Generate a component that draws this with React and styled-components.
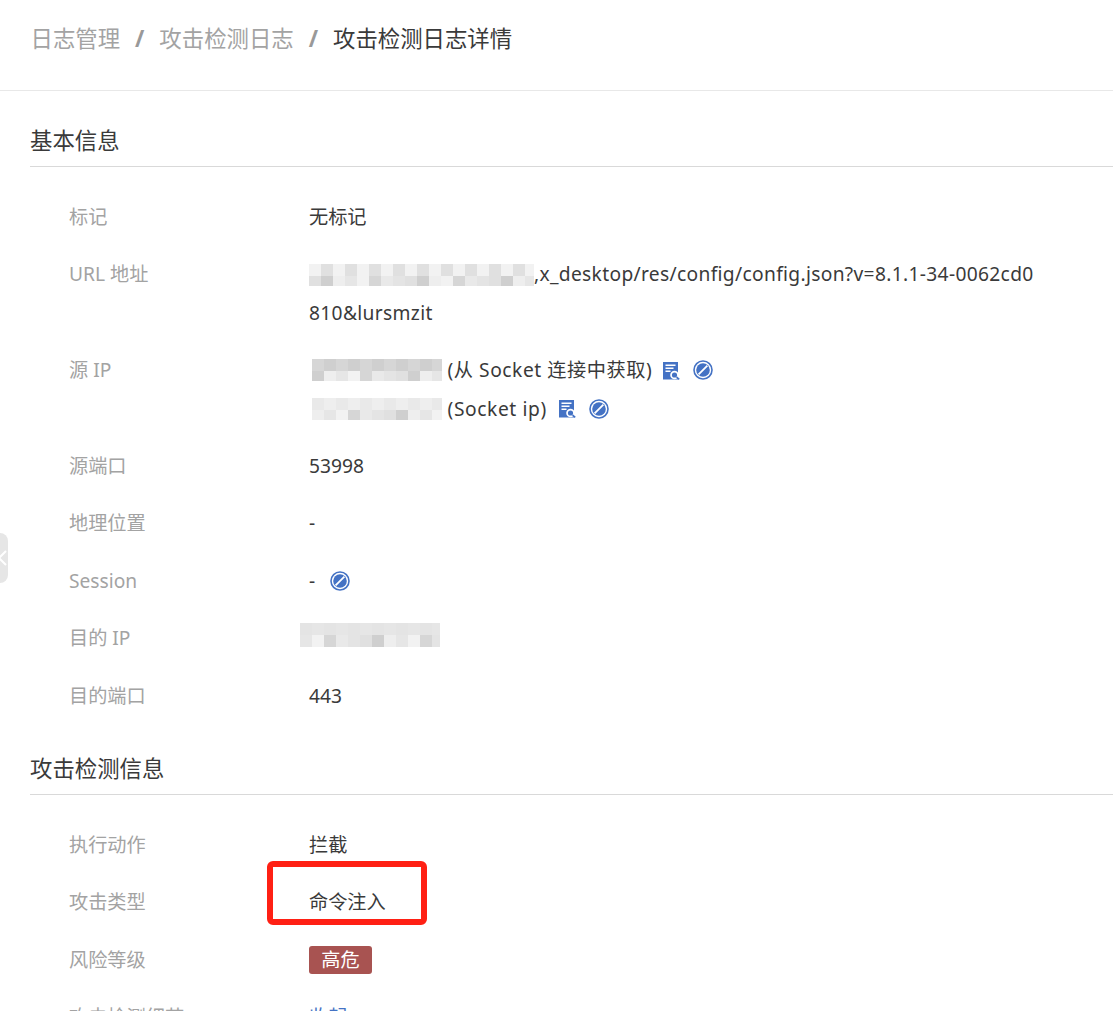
import React from "react";
import styled, { createGlobalStyle } from "styled-components";

const Global = createGlobalStyle`
  html, body { margin: 0; padding: 0; background: #fff; height: 100%; overflow: hidden; }
  body { font-family: "Noto Sans", "Noto Sans CJK SC", sans-serif; color: #333; }
`;
const Page = styled.div`
  width: 1113px; height: 1011px; overflow: hidden; position: relative; background: #fff;
`;
const Crumbs = styled.nav`
  height: 91px; box-sizing: border-box; border-bottom: 1px solid #e8e8e8;
  padding: 20px 0 0 30.5px; display: flex; align-items: flex-start;
  font-size: 22.4px; line-height: 38px; color: #a3a3a3;
`;
const Sep = styled.span` margin: 0 15px; font-weight: 700; color: #999; `;
const Current = styled.span` color: #3a3a3a; `;
const Body = styled.main` padding: 30px 0 0 30px; `;
const SectionTitle = styled.h2`
  margin: 0; font-size: 22.4px; line-height: 40px; font-weight: 400; color: #3a3a3a;
  height: 46px; box-sizing: border-box; border-bottom: 1px solid #d9d9d9;
  & + div { margin-top: 31px; }
`;
const Rows = styled.div` margin-bottom: 15px; `;
const Row = styled.div`
  display: flex; padding: 0 0 19px 39px; font-size: 19.2px; line-height: 38.4px;
`;
const Label = styled.div` width: 240px; flex: none; color: #a3a3a3; `;
const Value = styled.div` flex: 1; min-width: 0; width: 744px; color: #3a3a3a; word-break: break-all; `;
const Line = styled.div`
  display: flex; align-items: center; height: 38.4px; white-space: pre;
  letter-spacing: ${p => p.$track || 0}px;
`;
const Mosaic = styled.svg`
  display: inline-block; flex: none;
  margin-left: ${p => p.$shift || 0}px;
  margin-bottom: ${p => p.$lift || 0}px;
`;
const IconBtn = styled.svg` flex: none; margin-left: ${p => p.$gap}px; `;
const Tag = styled.span`
  display: inline-flex; align-items: center; justify-content: center;
  width: 63px; height: 28px; border-radius: 3px; background: #a85351; color: #fff;
  font-size: 19.2px; line-height: 28px;
`;
const TagLine = styled.div` height: 38.4px; display: flex; align-items: center; `;
const Link = styled.a` color: #4472c4; `;
const Highlight = styled.div`
  position: absolute; left: 267px; top: 861px; width: 160px; height: 64px; box-sizing: border-box;
  border: 6px solid #ff2014; border-radius: 6px;
`;
const Handle = styled.div`
  position: absolute; left: 0; top: 533px; width: 8px; height: 50px; background: #e6e6e6;
  border-radius: 0 8px 8px 0; overflow: hidden;
`;
const Chev = styled.svg` display: block; margin-top: 17px; `;

const shades = ["#e6e6e6", "#e0e0e0", "#d6d6d6", "#eeeeee", "#e4e4e4", "#f2f2f2", "#cfcfcf", "#e9e9e9"];
function Pixels({ w, h, seed, shift, lift, cell = 12 }) {
  const rects = [];
  for (let y = 0; y < h; y += cell) {
    for (let x = 0; x < w; x += cell) {
      const i = (x * 7 + y * 13 + seed * 5 + ((x * y) % 11)) % shades.length;
      rects.push(<rect key={`${x}-${y}`} x={x} y={y} width={cell} height={cell} fill={shades[i]} />);
    }
  }
  return <Mosaic $shift={shift} $lift={lift} width={w} height={h} viewBox={`0 0 ${w} ${h}`}>{rects}</Mosaic>;
}

const LookupIcon = ({ gap }) => (
  <IconBtn $gap={gap} width="17" height="19" viewBox="0 0 17 19">
    <path d="M0 1h15v17.5H0z" fill="#4472c4" />
    <path d="M2.5 4.2h10M2.5 7.2h8M2.5 10.2h5" stroke="#fff" strokeWidth="1.4" fill="none" />
    <circle cx="11.5" cy="14" r="4.3" fill="#fff" />
    <circle cx="11.5" cy="14" r="2.6" fill="#4472c4" />
    <path d="M13.6 16l2.6 2.4" stroke="#4472c4" strokeWidth="1.7" />
  </IconBtn>
);
const BanIcon = ({ gap }) => (
  <IconBtn $gap={gap} width="20" height="20" viewBox="0 0 20 20">
    <circle cx="10" cy="10" r="9" fill="#fff" stroke="#4472c4" strokeWidth="1.6" />
    <circle cx="10" cy="10" r="6.8" fill="#4472c4" />
    <path d="M5.6 14.4l8.8-8.8" stroke="#fff" strokeWidth="1.8" />
  </IconBtn>
);

export default function App() {
  return (
    <Page>
      <Global />
      <Crumbs>
        <span>日志管理</span><Sep>/</Sep><span>攻击检测日志</span><Sep>/</Sep><Current>攻击检测日志详情</Current>
      </Crumbs>
      <Body>
        <SectionTitle>基本信息</SectionTitle>
        <Rows>
          <Row><Label>标记</Label><Value>无标记</Value></Row>
          <Row>
            <Label>URL 地址</Label>
            <Value>
              <Line $track={0.33}><Pixels w={225} h={22} seed={1} />,x_desktop/res/config/config.json?v=8.1.1-34-0062cd0</Line>
              <Line $track={0.33}>810&amp;lursmzit</Line>
            </Value>
          </Row>
          <Row>
            <Label>源 IP</Label>
            <Value>
              <Line $track={0.55}><Pixels w={130} h={22} seed={2} shift={3} /> (从 Socket 连接中获取)<LookupIcon gap={11} /><BanIcon gap={13} /></Line>
              <Line $track={0.6}><Pixels w={130} h={22} seed={3} shift={3} /> (Socket ip)<LookupIcon gap={12} /><BanIcon gap={13} /></Line>
            </Value>
          </Row>
          <Row><Label>源端口</Label><Value>53998</Value></Row>
          <Row><Label>地理位置</Label><Value>-</Value></Row>
          <Row><Label>Session</Label><Value><Line>-<BanIcon gap={15} /></Line></Value></Row>
          <Row><Label>目的 IP</Label><Value><Line><Pixels w={140} h={24} seed={4} shift={-9} lift={6} /></Line></Value></Row>
          <Row><Label>目的端口</Label><Value>443</Value></Row>
        </Rows>
        <SectionTitle>攻击检测信息</SectionTitle>
        <Rows>
          <Row><Label>执行动作</Label><Value>拦截</Value></Row>
          <Row><Label>攻击类型</Label><Value>命令注入</Value></Row>
          <Row><Label>风险等级</Label><Value><TagLine><Tag>高危</Tag></TagLine></Value></Row>
          <Row><Label>攻击检测细节</Label><Value><Link>收起</Link></Value></Row>
        </Rows>
      </Body>
      <Highlight />
      <Handle>
        <Chev width="8" height="16" viewBox="0 0 8 16"><path d="M6 1L-1 8l7 7" stroke="#fff" strokeWidth="2" fill="none" /></Chev>
      </Handle>
    </Page>
  );
}
